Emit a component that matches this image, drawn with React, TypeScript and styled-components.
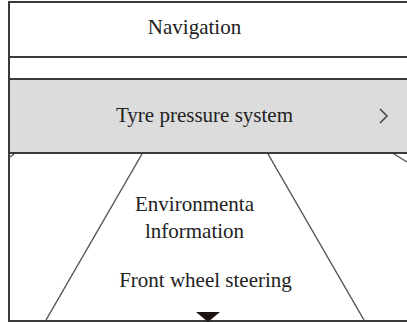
import React from "react";
import styled, { createGlobalStyle } from "styled-components";

const GlobalStyle = createGlobalStyle`
  html, body {
    margin: 0;
    padding: 0;
    background: #ffffff;
  }
  body {
    font-family: "Liberation Serif", "Times New Roman", serif;
    color: #222;
    overflow: hidden;
  }
`;

const Frame = styled.div`
  margin: 1px 0 0 8px;
  width: 399px;
  height: 317px;
  border-left: 2px solid #3a3a3a;
  border-top: 2px solid #3a3a3a;
  border-bottom: 2px solid #3a3a3a;
  display: flex;
  flex-direction: column;
`;

const Row = styled.div<{ $height: number; $selected?: boolean; $lift?: number }>`
  position: relative;
  height: ${(p) => p.$height}px;
  box-sizing: border-box;
  padding-bottom: ${(p) => p.$lift ?? 0}px;
  flex: none;
  border-bottom: 2px solid #3a3a3a;
  background: ${(p) => (p.$selected ? "#dcdcdc" : "#ffffff")};
  display: flex;
  align-items: center;
  justify-content: center;
`;

const Label = styled.span<{ $shift?: number }>`
  font-size: 21px;
  line-height: 27px;
  text-align: center;
  transform: translateX(${(p) => p.$shift ?? 0}px);
`;

const Chevron = styled.svg`
  position: absolute;
  right: 20px;
  top: 50%;
  margin-top: -9px;
`;

const Scene = styled.div`
  position: relative;
  flex: 1;
  display: flex;
  flex-direction: column;
  align-items: center;
  padding-top: 37px;
  gap: 22px;
`;

const Perspective = styled.svg`
  position: absolute;
  left: 0;
  top: 0;
  width: 397px;
  height: 166px;
`;

const Marker = styled.svg`
  position: absolute;
  left: 186px;
  bottom: -2px;
`;

export default function App() {
  return (
    <>
      <GlobalStyle />
      <Frame>
        <Row $height={55} $lift={4}>
          <Label $shift={-15}>Navigation</Label>
        </Row>
        <Row $height={22} />
        <Row $height={74} $selected $lift={2}>
          <Label $shift={-5}>Tyre pressure system</Label>
          <Chevron width="11" height="18" viewBox="0 0 11 18">
            <path d="M2 2 L9 9 L2 16" fill="none" stroke="#444" strokeWidth="1.5" />
          </Chevron>
        </Row>
        <Scene>
          <Perspective viewBox="0 0 397 166">
            <line x1="132" y1="0" x2="36" y2="166" stroke="#555" strokeWidth="1.4" />
            <line x1="258" y1="0" x2="354" y2="166" stroke="#555" strokeWidth="1.4" />
            <line x1="4" y1="0" x2="0" y2="3" stroke="#555" strokeWidth="1.4" />
            <line x1="384" y1="0" x2="397" y2="8" stroke="#555" strokeWidth="1.4" />
          </Perspective>
          <Label $shift={-15}>
            Environmenta
            <br />
            lnformation
          </Label>
          <Label $shift={-4}>Front wheel steering</Label>
          <Marker width="24" height="10" viewBox="0 0 24 10">
            <path d="M0 0 H24 L12 10 Z" fill="#1e1512" />
          </Marker>
        </Scene>
      </Frame>
    </>
  );
}
